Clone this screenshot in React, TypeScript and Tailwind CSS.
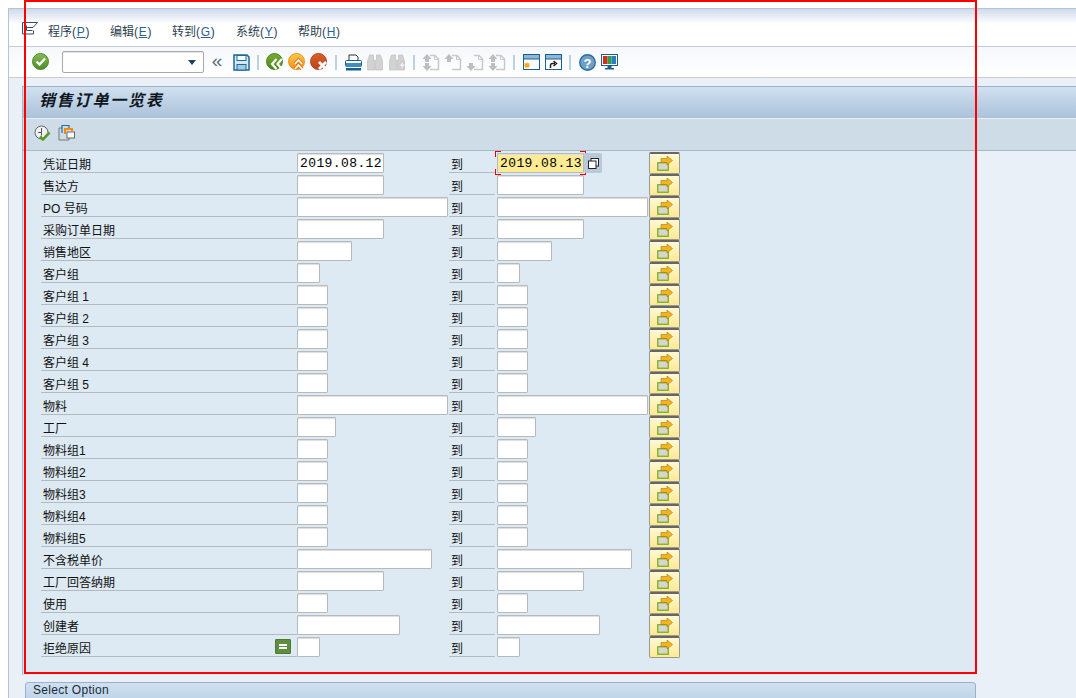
import React from 'react';

const cjk = "font-['Liberation_Sans','Noto_Sans_CJK_SC',sans-serif]";
const dateText = "font-['Liberation_Mono',monospace] text-[13px] leading-[19px] tracking-[0.4px] text-black";
const fieldBox = 'h-[20px] rounded-[1px] border border-[#b6babd] shadow-[inset_0_1px_1px_#dedede]';

type Row = { label: string; w: string; date?: string; date2?: string; flag?: boolean };

const rows: Row[] = [
  { label: '凭证日期', w: 'w-[87px]', date: '2019.08.12', date2: '2019.08.13' },
  { label: '售达方', w: 'w-[87px]' },
  { label: 'PO 号码', w: 'w-[151px]' },
  { label: '采购订单日期', w: 'w-[87px]' },
  { label: '销售地区', w: 'w-[55px]' },
  { label: '客户组', w: 'w-[23px]' },
  { label: '客户组 1', w: 'w-[31px]' },
  { label: '客户组 2', w: 'w-[31px]' },
  { label: '客户组 3', w: 'w-[31px]' },
  { label: '客户组 4', w: 'w-[31px]' },
  { label: '客户组 5', w: 'w-[31px]' },
  { label: '物料', w: 'w-[151px]' },
  { label: '工厂', w: 'w-[39px]' },
  { label: '物料组1', w: 'w-[31px]' },
  { label: '物料组2', w: 'w-[31px]' },
  { label: '物料组3', w: 'w-[31px]' },
  { label: '物料组4', w: 'w-[31px]' },
  { label: '物料组5', w: 'w-[31px]' },
  { label: '不含税单价', w: 'w-[135px]' },
  { label: '工厂回答纳期', w: 'w-[87px]' },
  { label: '使用', w: 'w-[31px]' },
  { label: '创建者', w: 'w-[103px]' },
  { label: '拒绝原因', w: 'w-[23px]', flag: true },
];

const menus = [
  { name: '程序', key: 'P', w: 'w-[62px]' },
  { name: '编辑', key: 'E', w: 'w-[62px]' },
  { name: '转到', key: 'G', w: 'w-[64px]' },
  { name: '系统', key: 'Y', w: 'w-[62px]' },
  { name: '帮助', key: 'H', w: 'w-[62px]' },
];

function Field({ w, value }: { w: string; value?: string }) {
  return <div className={`${w} ${fieldBox} mt-[1px] shrink-0 bg-white pl-[2px] ${dateText}`}>{value}</div>;
}

function MultiButton() {
  return (
    <div className="flex h-[22px] w-[31px] shrink-0 items-center justify-center rounded-[2px] border border-[#9a9a8c] border-t-2 border-t-[#66666a] bg-gradient-to-b from-[#fff8d4] to-[#fde98f] pb-[1px]">
      <svg width="16" height="15" viewBox="0 0 16 15">
        <rect x="0.75" y="6.75" width="10.5" height="7.5" fill="#d6d6ce" stroke="#7dae1e" strokeWidth="1.3" />
        <path d="M4 2.5h6V0l5.5 4.5L10 9V6.5H4z" fill="#f8b21a" stroke="#8a6a1a" strokeWidth="0.5" />
      </svg>
    </div>
  );
}

// every toolbar icon sits in a 22px slot, the separators in a 12px one
function Slot({ children }: { children: React.ReactNode }) {
  return <div className="flex h-[22px] w-[22px] shrink-0 items-center justify-center">{children}</div>;
}

function Sep() {
  return (
    <div className="flex w-[12px] shrink-0 justify-center">
      <div className="h-[15px] w-[2px] bg-[#bcd2e3]" />
    </div>
  );
}

function RoundIcon({ id, from, to, children }: { id: string; from: string; to: string; children: React.ReactNode }) {
  return (
    <svg width="18" height="18" viewBox="0 0 18 18">
      <defs>
        <linearGradient id={id} x1="0" y1="0" x2="0" y2="1">
          <stop offset="0" stopColor={from} />
          <stop offset="1" stopColor={to} />
        </linearGradient>
      </defs>
      <circle cx="8.5" cy="8.5" r="8" fill={`url(#${id})`} stroke={to} />
      {children}
    </svg>
  );
}

function GreyDoc({ up, down }: { up?: boolean; down?: boolean }) {
  return (
    <svg width="18" height="17" viewBox="0 0 18 17" fill="none">
      <path d="M8 1.5h5l3.5 3.5v10.5H8" stroke="#c9c9c9" strokeWidth="1.5" />
      <path d="M12.5 1.5v4h4" stroke="#c9c9c9" />
      {up && <path d="M5 0 0.5 5h2.5v3h4V5h2.5z" fill="#bebebe" />}
      {down && <path d="M5 17 0.5 12h2.5V9h4v3h2.5z" fill="#bebebe" />}
    </svg>
  );
}

function Binoculars({ plus }: { plus?: boolean }) {
  return (
    <svg width="16" height="17" viewBox="0 0 16 17" fill="#d2d2d2" stroke="#c0c0c0" strokeWidth="0.7">
      <path d="M2.5 1h4v5h1v10H.5V7z" />
      <path d="M9.5 1h4l2 6v9h-7V6h1z" />
      {plus && <path d="M10 10h2V8h2.5v2h1.5v2.5h-1.5v2.5H12v-2.5h-2z" fill="#eeeeee" stroke="#bdbdbd" />}
    </svg>
  );
}

export default function App() {
  return (
    <div className={`${cjk} relative h-[698px] w-[1076px] overflow-hidden bg-white text-[12px] text-[#1b1b1b]`}>
      <div className="absolute left-[24px] top-0 z-10 h-[674px] w-[953px] border-2 border-[#ff0000]" />
      <div className="pl-[8px] pt-[8px]">
        <div className="h-[690px] border-l border-t border-[#b4c4d6]">
          {/* menu bar */}
          <div className="flex h-[38px] items-center border-b border-[#c3ccd8] bg-gradient-to-b from-[#d0daea] via-white via-40% to-white pt-[8px]">
            <svg className="ml-[13px] mr-[10px] -mt-[6px] shrink-0" width="16" height="13" viewBox="0 0 16 13" fill="none" stroke="#33506f">
              <path d="M11.5 8.5v3.5H.5V.5h15L11 5.5H4.5" />
              <path d="M4.5 3.5V8.5h6" />
            </svg>
            {menus.map((m) => (
              <span key={m.key} className={`${m.w} shrink-0 whitespace-nowrap text-[12px] leading-[16px] text-[#2e3f52]`}>
                {m.name}
                <span className="tracking-[0.7px]">
                  (<span className="text-[#2e5f94] underline">{m.key}</span>)
                </span>
              </span>
            ))}
          </div>
          {/* toolbar */}
          <div className="flex h-[31px] items-center border-b border-[#cccccc] bg-gradient-to-b from-[#f5f8fc] to-white pl-[23px]">
            <RoundIcon id="ok" from="#86bd50" to="#4d8a2a">
              <path d="M4.5 8.5l3 3 5.5-6" stroke="#fff" strokeWidth="2.4" fill="none" />
            </RoundIcon>
            <div className="ml-[12px] flex h-[22px] w-[142px] shrink-0 items-center justify-end rounded-[2px] border border-[#a9a9a9] bg-white pr-[7px] shadow-[inset_0_1px_1px_#e2e2e2]">
              <div className="h-0 w-0 border-x-[4px] border-t-[5px] border-x-transparent border-t-[#1f3f60]" />
            </div>
            <div className="flex w-[26px] shrink-0 justify-center pb-[3px] text-[19px] leading-none text-[#5e6b78]">«</div>
            <Slot>
              <svg width="17" height="17" viewBox="0 0 17 17" fill="none">
                <path d="M1 1h13l2 2v13H1z" fill="#d5e8f4" stroke="#1d6a9a" strokeWidth="1.5" />
                <rect x="4" y="1.5" width="9" height="5" fill="#fff" stroke="#1d6a9a" />
                <rect x="4" y="10.5" width="9" height="5.5" fill="#a5cbe2" stroke="#1d6a9a" />
              </svg>
            </Slot>
            <Sep />
            <Slot>
              <RoundIcon id="back" from="#78ad32" to="#4f8420">
                <path d="M10.5 6 6 11l4.5 5M16 6l-4.5 5 4.5 5" stroke="#fff" strokeWidth="2.2" fill="none" />
              </RoundIcon>
            </Slot>
            <Slot>
              <RoundIcon id="exit" from="#fdcb45" to="#ef8f1c">
                <path d="M7 11l3.5-4 3.5 4M7 16l3.5-4 3.5 4" stroke="#e8760f" strokeWidth="3.6" fill="none" />
                <path d="M7 11l3.5-4 3.5 4M7 16l3.5-4 3.5 4" stroke="#fff" strokeWidth="1.8" fill="none" />
              </RoundIcon>
            </Slot>
            <Slot>
              <RoundIcon id="cancel" from="#dc6028" to="#b8431a">
                <path d="M9 9l7 7M16 9l-7 7" stroke="#fff" strokeWidth="2.8" fill="none" />
              </RoundIcon>
            </Slot>
            <Sep />
            <Slot>
              <svg width="17" height="17" viewBox="0 0 17 17" fill="none">
                <path d="M4 7V1h7l2 2v4" stroke="#333" />
                <rect x="0.5" y="6.5" width="16" height="6" rx="1" fill="#fff" stroke="#17608f" />
                <rect x="1" y="9" width="15" height="4" fill="#3f8dbd" />
                <rect x="1" y="14" width="15" height="2.5" fill="#155f8e" />
              </svg>
            </Slot>
            <Slot>
              <Binoculars />
            </Slot>
            <Slot>
              <Binoculars plus />
            </Slot>
            <Sep />
            <Slot>
              <GreyDoc up down />
            </Slot>
            <Slot>
              <GreyDoc up />
            </Slot>
            <Slot>
              <GreyDoc down />
            </Slot>
            <Slot>
              <GreyDoc up down />
            </Slot>
            <Sep />
            <Slot>
              <svg width="17" height="16" viewBox="0 0 17 16">
                <rect x="0.5" y="0.5" width="16" height="15" fill="#fff" stroke="#17608f" />
                <rect x="0.5" y="0.5" width="16" height="4.5" fill="#90b8d6" stroke="#17608f" />
                <path d="M4 8l.8 1.4 1.6-.6-.4 1.7 1.5.8-1.5.8.4 1.7-1.6-.6L4 14.6l-.8-1.4-1.6.6.4-1.7-1.5-.8 1.5-.8-.4-1.7 1.6.6z" fill="#f8a81c" />
              </svg>
            </Slot>
            <Slot>
              <svg width="17" height="16" viewBox="0 0 17 16" fill="none">
                <rect x="0.5" y="0.5" width="16" height="15" fill="#fff" stroke="#17608f" />
                <rect x="0.5" y="0.5" width="16" height="4.5" fill="#90b8d6" stroke="#17608f" />
                <path d="M5.5 14v-2.5q0-2 2-2h2.5M8.5 7l3 2.5-3 2.5" stroke="#222" strokeWidth="1.5" />
              </svg>
            </Slot>
            <Sep />
            <Slot>
              <svg width="17" height="17" viewBox="0 0 17 17">
                <circle cx="8.5" cy="8.5" r="7.75" fill="#6fa0c8" stroke="#2d6c9e" strokeWidth="1.4" />
                <text x="8.5" y="13.5" textAnchor="middle" fontSize="13" fontWeight="700" fill="#fff" fontFamily="Liberation Sans">?</text>
              </svg>
            </Slot>
            <Slot>
              <svg width="17" height="16" viewBox="0 0 17 16">
                <rect x="0.5" y="0.5" width="16" height="11" fill="#fff" stroke="#17608f" />
                <rect x="2" y="2" width="4.5" height="8" fill="#d52b1e" />
                <rect x="6.5" y="2" width="4" height="8" fill="#3c9a3c" />
                <rect x="10.5" y="2" width="4.5" height="8" fill="#2a7fc4" />
                <path d="M6.5 12h4v2h2.5v1.5H4V14h2.5z" fill="#17608f" />
              </svg>
            </Slot>
          </div>
          {/* body */}
          <div className="h-[620px] bg-[#e9f0f7] pt-[8px]">
            <div className="ml-[13px] border-l border-[#a8b8c8]">
              <div className="flex h-[32px] items-center border-t border-[#9fb1c6] bg-gradient-to-b from-[#d0e0ef] to-[#abc2da] pb-[4px] pl-[16px] text-[16px] font-bold italic leading-none tracking-[1.8px] text-[#10171f]">
                销售订单一览表
              </div>
              <div className="flex h-[33px] items-center gap-[6px] border-y border-t-[#e8f0f7] border-b-[#a7b8c8] bg-[#cedce8] pb-[3px] pl-[11px]">
                <svg width="18" height="17" viewBox="0 0 18 17" fill="none">
                  <circle cx="7.5" cy="7.5" r="6.5" fill="#eef2f6" stroke="#666" />
                  <path d="M7.5 3v4.5H4M7.5 7.5v3" stroke="#555" />
                  <path d="M6 11.5l3 3 6.5-7" stroke="#5a9a2c" strokeWidth="2.6" />
                </svg>
                <svg width="17" height="16" viewBox="0 0 17 16" fill="none">
                  <path d="M4 3H1v12h10v-2" stroke="#777" />
                  <path d="M4 8V.5h7V3" stroke="#1d70a8" strokeWidth="1.2" />
                  <path d="M7 9V4h7v2" stroke="#f08c16" strokeWidth="2" />
                  <rect x="9" y="7" width="7.5" height="6" fill="#fff" stroke="#666" />
                </svg>
              </div>
              <div className="h-[524px] w-[954px] bg-[#dde9f3] pl-[18px] pt-[1px]">
                {rows.map((r, i) => (
                  <div key={r.label} className="flex h-[22px] items-start">
                    <div className="relative mt-[1px] flex h-[20px] w-[256px] shrink-0 items-end border-b border-[#b4b9be] pl-[2px] text-[12px] leading-[14px] text-[#111]">
                      {r.label}
                      {r.flag && (
                        <div className="absolute right-[6px] top-[2px] flex h-[15px] w-[16px] items-center justify-center rounded-[1px] border border-[#4d7a33] bg-[#5d8f3e]">
                          <div className="h-[5px] w-[8px] border-y-2 border-white" />
                        </div>
                      )}
                    </div>
                    <div className="w-[152px] shrink-0">
                      <Field w={r.w} value={r.date} />
                    </div>
                    <div className="mt-[1px] flex h-[20px] w-[46px] shrink-0 items-end border-b border-[#b4b9be] pl-[2px] text-[12px] leading-[14px] text-[#111]">
                      到
                    </div>
                    <div className="ml-[2px] w-[152px] shrink-0">
                      {i === 0 ? (
                        <div className="relative mt-[1px] w-[87px]">
                          <div className={`${fieldBox} bg-[#fdeb94] pl-[2px] ${dateText}`}>{r.date2}</div>
                          <div className="absolute -left-[2px] -top-[2px] h-[6px] w-[6px] border-l border-t border-[#e00000]" />
                          <div className="absolute -right-[2px] -top-[2px] h-[6px] w-[6px] border-r border-t border-[#e00000]" />
                          <div className="absolute -bottom-[2px] -left-[2px] h-[6px] w-[6px] border-b border-l border-[#e00000]" />
                          <div className="absolute -bottom-[2px] -right-[2px] h-[6px] w-[6px] border-b border-r border-[#e00000]" />
                          <div className="absolute left-[87px] top-0 flex h-[20px] w-[18px] items-center justify-center rounded-[2px] bg-[#b9c9dc]">
                            <svg width="11" height="11" viewBox="0 0 11 11">
                              <rect x="3" y="0.5" width="7.5" height="7.5" fill="#fff" stroke="#222" />
                              <rect x="0.5" y="3" width="7.5" height="7.5" fill="#fff" stroke="#222" />
                            </svg>
                          </div>
                        </div>
                      ) : (
                        <Field w={r.w} />
                      )}
                    </div>
                    <MultiButton />
                  </div>
                ))}
              </div>
            </div>
            <div className="ml-[16px] mt-[7px] h-[20px] w-[951px] rounded-t-[3px] border border-[#9ab2c8] bg-gradient-to-b from-[#cfe0f0] to-[#bdd3e8] pl-[7px] font-['Liberation_Sans','Noto_Sans',sans-serif] text-[12px] leading-[14px] tracking-[0.3px] text-[#1c2a38]">
              Select Option
            </div>
          </div>
        </div>
      </div>
    </div>
  );
}
